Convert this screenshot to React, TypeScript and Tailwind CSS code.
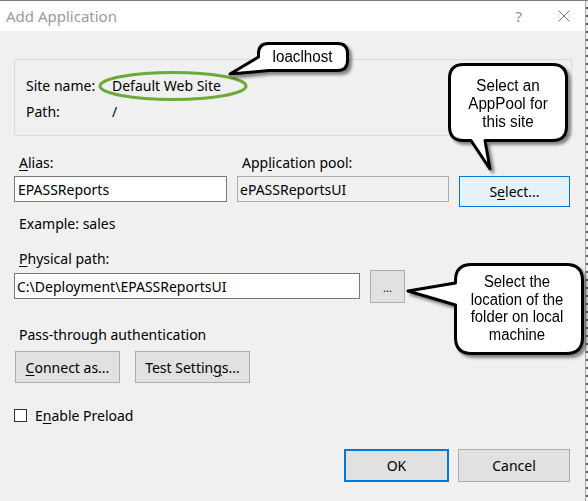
import React from "react";

function U({ children }: { children: React.ReactNode }) {
  return <span className="underline decoration-1 underline-offset-[2px]">{children}</span>;
}

function Callouts() {
  // outer stroke edges inset by 1.5 for 3px stroke
  const c1 = (() => {
    const x0 = 449.5, x1 = 566.5, y0 = 64.5, y1 = 140.5, r = 14;
    return `M ${x0 + r} ${y0} H ${x1 - r} Q ${x1} ${y0} ${x1} ${y0 + r} V ${y1 - r} Q ${x1} ${y1} ${x1 - r} ${y1} H 485 L 490 169 L 471 ${y1} H ${x0 + r} Q ${x0} ${y1} ${x0} ${y1 - r} V ${y0 + r} Q ${x0} ${y0} ${x0 + r} ${y0} Z`;
  })();
  const c2 = (() => {
    const x0 = 455.5, x1 = 582.5, y0 = 264.5, y1 = 353.5, r = 16;
    return `M ${x0 + r} ${y0} H ${x1 - r} Q ${x1} ${y0} ${x1} ${y0 + r} V ${y1 - r} Q ${x1} ${y1} ${x1 - r} ${y1} H ${x0 + r} Q ${x0} ${y1} ${x0} ${y1 - r} V 305 L 408 291 L ${x0} 283 V ${y0 + r} Q ${x0} ${y0} ${x0 + r} ${y0} Z`;
  })();
  const c3 = (() => {
    const x0 = 258.5, x1 = 347.5, y0 = 43.5, y1 = 70.5, r = 10;
    return `M ${x0 + r} ${y0} H ${x1 - r} Q ${x1} ${y0} ${x1} ${y0 + r} V ${y1 - r} Q ${x1} ${y1} ${x1 - r} ${y1} H 269 L 230 74 L ${x0} 57 V ${y0 + r} Q ${x0} ${y0} ${x0 + r} ${y0} Z`;
  })();
  return (
    <>
      <svg className="absolute left-0 top-0 pointer-events-none" width={588} height={501} viewBox="0 0 588 501">
        <defs>
          <filter id="sh" x="-20%" y="-20%" width="140%" height="140%">
            <feDropShadow dx="3" dy="3" stdDeviation="1.6" floodColor="#000" floodOpacity="0.45" />
          </filter>
        </defs>
        <ellipse cx="173" cy="86" rx="73" ry="13.5" fill="none" stroke="#6fa83a" strokeWidth="3" />
        <path d={c3} fill="#fff" stroke="#000" strokeWidth="3" strokeLinejoin="round" filter="url(#sh)" />
        <path d={c1} fill="#fff" stroke="#000" strokeWidth="3" strokeLinejoin="round" filter="url(#sh)" />
        <path d={c2} fill="#fff" stroke="#000" strokeWidth="3" strokeLinejoin="round" filter="url(#sh)" />
      </svg>
      <div className="absolute left-[258px] top-[43px] w-[90px] h-[28px] flex items-center justify-center font-['Liberation_Sans',Arial,sans-serif] text-[16px] leading-[18px] text-black">
        <span className="inline-block scale-x-[0.95]">loaclhost</span>
      </div>
      <div className="absolute left-[448px] top-[77px] w-[120px] text-center font-['Liberation_Sans',Arial,sans-serif] text-[16px] leading-[18px] text-black">
        <div className="scale-x-[0.95]">Select an<br />AppPool for<br />this site</div>
      </div>
      <div className="absolute left-[454px] top-[273px] w-[126px] text-center font-['Liberation_Sans',Arial,sans-serif] text-[16px] leading-[17.7px] text-black">
        <div className="scale-x-[0.93]">Select the<br />location of the<br />folder on local<br />machine</div>
      </div>
    </>
  );
}

export default function App() {
  return (
    <div className="relative w-[588px] h-[501px] overflow-hidden bg-[#f0f0f0] text-black font-['Noto_Sans',sans-serif] text-[14px]">
      <div className="h-[1px] bg-[#7c7c7c]" />
      <div className="flex h-[500px]">
        <div className="w-[585px] flex flex-col">
          {/* title bar */}
          <div className="h-[30px] bg-white flex items-center shrink-0">
            <span className="pl-[6px] text-[15px] text-[#9b9b9b]">Add Application</span>
            <span className="ml-auto mr-[36px] text-[15px] text-[#8c8c8c]">?</span>
            <svg width="12" height="12" viewBox="0 0 12 12" className="mr-[15px]">
              <path d="M0.5 0.5 L11.5 11.5 M11.5 0.5 L0.5 11.5" stroke="#7a7a7a" strokeWidth="1" />
            </svg>
          </div>
          {/* body */}
          <div className="flex flex-col pl-[14px]">
            <div className="mt-[28px] w-[558px] h-[77px] border border-[#dcdcdc] pl-[11px] pt-[15px]">
              <div className="flex h-[20px] items-center">
                <span className="w-[86px]">Site name:</span>
                <span>Default Web Site</span>
              </div>
              <div className="flex h-[20px] items-center mt-[6px]">
                <span className="w-[86px]">Path:</span>
                <span>/</span>
              </div>
            </div>

            <div className="mt-[16px] flex h-[20px] items-center">
              <span className="w-[223px] pl-[5px]"><U>A</U>lias:</span>
              <span className="pl-[5px]">App<U>l</U>ication pool:</span>
            </div>
            <div className="mt-[4px] flex items-start gap-[10px]">
              <div className="w-[213px] h-[26px] border border-[#7a7a7a] bg-white flex items-center pl-[3px]">EPASSReports</div>
              <div className="w-[212px] h-[26px] border border-[#acacac] bg-[#f0f0f0] flex items-center pl-[2px]">ePASSReportsUI</div>
              <div className="w-[111px] h-[31px] border border-[#0078d7] bg-[#e5f1fb] flex items-center justify-center">S<U>e</U>lect...</div>
            </div>

            <div className="mt-[6px] h-[20px] flex items-center pl-[5px]">Example: sales</div>

            <div className="mt-[15px] h-[20px] flex items-center pl-[5px]"><U>P</U>hysical path:</div>
            <div className="mt-[2px] h-[32px] flex items-center gap-[10px]">
              <div className="w-[346px] h-[26px] border border-[#7a7a7a] bg-white flex items-center pl-[2px]">C:\Deployment\EPASSReportsUI</div>
              <div className="w-[35px] h-[33px] border border-[#adadad] bg-[#e1e1e1] flex items-center justify-center text-[11px] leading-none pt-[2px]">...</div>
            </div>

            <div className="mt-[22px] h-[20px] flex items-center pl-[5px]">Pass-through authentication</div>
            <div className="mt-[7px] flex gap-[15px] pl-[1px]">
              <div className="w-[105px] h-[32px] border border-[#adadad] bg-[#e1e1e1] flex items-center justify-center"><U>C</U>onnect as...</div>
              <div className="w-[115px] h-[32px] border border-[#adadad] bg-[#e1e1e1] flex items-center justify-center">Test Settin<U>g</U>s...</div>
            </div>

            <div className="mt-[22px] h-[20px] flex items-center">
              <div className="w-[13px] h-[13px] border border-[#333333] bg-white" />
              <span className="ml-[8px]">E<U>n</U>able Preload</span>
            </div>

            <div className="mt-[24px] flex justify-end gap-[9px] pr-[15px]">
              <div className="w-[105px] h-[33px] border-2 border-[#0078d7] bg-[#e1e1e1] flex items-center justify-center">OK</div>
              <div className="w-[112px] h-[33px] border border-[#adadad] bg-[#e1e1e1] flex items-center justify-center">Cancel</div>
            </div>
          </div>
        </div>
        <div className="w-[3px] border-l border-[#a8a8a8] bg-[repeating-linear-gradient(to_bottom,#f2f2f2_0px,#f2f2f2_6px,#4a5874_6px,#4a5874_8px)]" />
      </div>
      <Callouts />
    </div>
  );
}
